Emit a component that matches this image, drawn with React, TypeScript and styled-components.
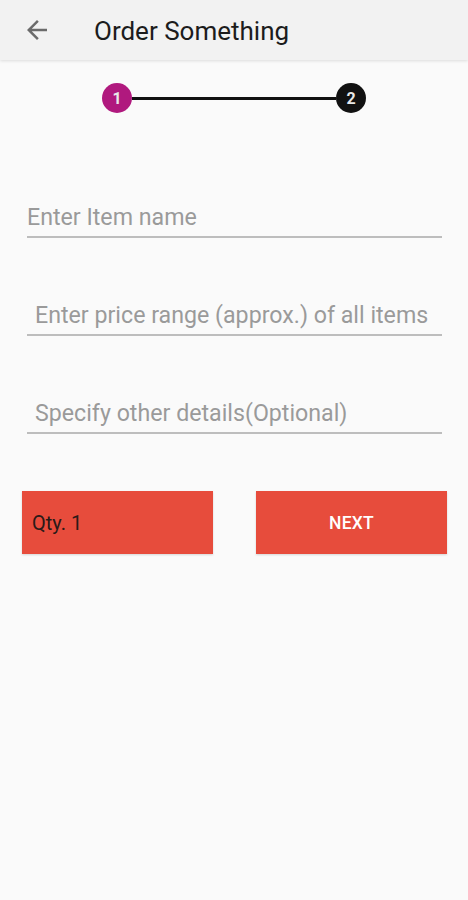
import React from "react";
import styled, { createGlobalStyle } from "styled-components";

const Global = createGlobalStyle`
  html, body { margin: 0; padding: 0; background: #fafafa; }
  body { font-family: Roboto, "Noto Sans", sans-serif; }
  * { box-sizing: border-box; }
`;

const Screen = styled.div`
  width: 468px;
  height: 900px;
  background: #fafafa;
  display: flex;
  flex-direction: column;
`;

const AppBar = styled.header`
  height: 60px;
  background: #f2f2f2;
  display: flex;
  align-items: center;
  padding-left: 22px;
  box-shadow: 0 1px 3px rgba(0, 0, 0, 0.12);
  position: relative;
  z-index: 1;
`;

const BackButton = styled.button`
  border: none;
  background: none;
  padding: 0;
  width: 30px;
  height: 30px;
  display: flex;
  align-items: center;
  justify-content: center;
  color: #6b6b6b;
`;

const Title = styled.h1`
  margin: 2px 0 0 42px;
  font-size: 26px;
  font-weight: 400;
  color: #1c1c1c;
`;

const Stepper = styled.div`
  display: flex;
  align-items: center;
  margin: 23px 0 0 102px;
  width: 264px;
`;

const StepDot = styled.div<{ $color: string }>`
  width: 30px;
  height: 30px;
  border-radius: 50%;
  background: ${(p) => p.$color};
  color: #e8e8e8;
  font-size: 16px;
  font-weight: 700;
  display: flex;
  align-items: center;
  justify-content: center;
  flex-shrink: 0;
`;

const StepLine = styled.div`
  flex: 1;
  height: 3px;
  background: #111;
`;

const Form = styled.div`
  display: flex;
  flex-direction: column;
  padding: 0 26px 0 27px;
  margin-top: 81px;
  gap: 54px;
`;

const Field = styled.div<{ $indent: number }>`
  border-bottom: 2px solid #bdbdbd;
  padding: 0 0 4px ${(p) => p.$indent}px;
  font-size: 23.2px;
  line-height: 30px;
  color: #9a9a9a;
  height: 44px;
  display: flex;
  align-items: flex-end;
  white-space: nowrap;
`;

const Buttons = styled.div`
  display: flex;
  justify-content: space-between;
  padding: 0 21px 0 22px;
  margin-top: 57px;
`;

const RedBox = styled.div<{ $center?: boolean }>`
  width: 191px;
  height: 63px;
  background: #e74c3c;
  display: flex;
  align-items: center;
  justify-content: ${(p) => (p.$center ? "center" : "flex-start")};
  padding-left: ${(p) => (p.$center ? 0 : 10)}px;
  box-shadow: 0 1px 2px rgba(0, 0, 0, 0.15);
`;

const QtyText = styled.span`
  font-size: 20px;
  color: #2a1a18;
`;

const NextText = styled.span`
  font-size: 17.5px;
  font-weight: 500;
  color: #fff;
  letter-spacing: 0.2px;
`;

export default function App() {
  return (
    <>
      <Global />
      <Screen>
        <AppBar>
          <BackButton aria-label="back">
            <svg width="30" height="30" viewBox="0 0 24 24" fill="currentColor">
              <path d="M20 11H7.83l5.59-5.59L12 4l-8 8 8 8 1.41-1.41L7.83 13H20v-2z" />
            </svg>
          </BackButton>
          <Title>Order Something</Title>
        </AppBar>
        <Stepper>
          <StepDot $color="#b0197e">1</StepDot>
          <StepLine />
          <StepDot $color="#111">2</StepDot>
        </Stepper>
        <Form>
          <Field $indent={0}>Enter Item name</Field>
          <Field $indent={8}>Enter price range (approx.) of all items</Field>
          <Field $indent={8}>Specify other details(Optional)</Field>
        </Form>
        <Buttons>
          <RedBox>
            <QtyText>Qty. 1</QtyText>
          </RedBox>
          <RedBox $center>
            <NextText>NEXT</NextText>
          </RedBox>
        </Buttons>
      </Screen>
    </>
  );
}
